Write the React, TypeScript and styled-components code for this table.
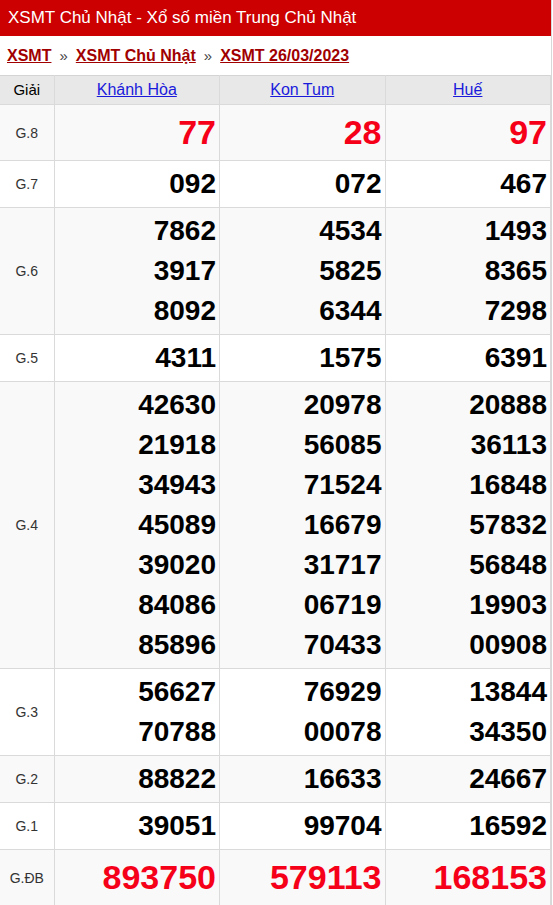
import React from 'react';
import styled, { createGlobalStyle } from 'styled-components';

const GlobalStyle = createGlobalStyle`
  body {
    margin: 0;
    background: #fff;
    font-family: "Liberation Sans", Arial, sans-serif;
  }
`;

const Wrapper = styled.div`
  width: 551px;
  border-right: 1px solid #d8d8d8;
  background: #fff;
`;

const TitleBar = styled.h2`
  margin: 0;
  height: 36px;
  padding: 0 8px;
  display: flex;
  align-items: center;
  background: #cc0000;
  color: #fff;
  font-size: 17px;
  font-weight: normal;
`;

const Breadcrumb = styled.div`
  height: 39px;
  padding: 0 7px;
  display: flex;
  align-items: center;
  font-size: 16px;
  font-weight: bold;
`;

const Crumb = styled.a`
  color: #a00000;
  text-decoration: underline;
`;

const Sep = styled.span`
  color: #444;
  font-weight: normal;
  font-size: 15px;
  margin: 0 8px;
`;

const Table = styled.table`
  width: 100%;
  border-collapse: collapse;
  table-layout: fixed;
`;

const HeadCell = styled.th`
  background: #e8e8e8;
  border: 1px solid #dadada;
  border-top-color: #d4d4d4;
  padding: 3px 2px;
  line-height: 22px;
  font-size: 15px;
  font-weight: normal;
  color: #000;
  text-align: center;
  &:first-child {
    border-left: none;
  }
`;

const HeadLink = styled.a`
  color: #1a1adb;
  font-size: 16px;
  text-decoration: underline;
`;

const Row = styled.tr<{ $striped: boolean }>`
  background: ${(p) => (p.$striped ? '#f9f9f9' : '#fff')};
`;

const LabelCell = styled.td`
  border: 1px solid #dadada;
  border-left: none;
  padding: 3px 2px;
  text-align: center;
  vertical-align: middle;
  font-size: 14px;
  color: #333;
`;

const NumberCell = styled.td`
  border: 1px solid #dadada;
  padding: 3px 3px;
  text-align: right;
  vertical-align: middle;
`;

const Num = styled.div<{ $special: boolean }>`
  font-weight: bold;
  font-size: ${(p) => (p.$special ? '34px' : '28px')};
  line-height: ${(p) => (p.$special ? '49px' : '40px')};
  color: ${(p) => (p.$special ? '#f50018' : '#000')};
`;

const provinces = ['Khánh Hòa', 'Kon Tum', 'Huế'];

type Prize = { label: string; special?: boolean; values: string[][] };

const prizes: Prize[] = [
  { label: 'G.8', special: true, values: [['77'], ['28'], ['97']] },
  { label: 'G.7', values: [['092'], ['072'], ['467']] },
  {
    label: 'G.6',
    values: [
      ['7862', '3917', '8092'],
      ['4534', '5825', '6344'],
      ['1493', '8365', '7298'],
    ],
  },
  { label: 'G.5', values: [['4311'], ['1575'], ['6391']] },
  {
    label: 'G.4',
    values: [
      ['42630', '21918', '34943', '45089', '39020', '84086', '85896'],
      ['20978', '56085', '71524', '16679', '31717', '06719', '70433'],
      ['20888', '36113', '16848', '57832', '56848', '19903', '00908'],
    ],
  },
  {
    label: 'G.3',
    values: [
      ['56627', '70788'],
      ['76929', '00078'],
      ['13844', '34350'],
    ],
  },
  { label: 'G.2', values: [['88822'], ['16633'], ['24667']] },
  { label: 'G.1', values: [['39051'], ['99704'], ['16592']] },
  { label: 'G.ĐB', special: true, values: [['893750'], ['579113'], ['168153']] },
];

export default function App() {
  return (
    <Wrapper>
      <GlobalStyle />
      <TitleBar>XSMT Chủ Nhật - Xổ số miền Trung Chủ Nhật</TitleBar>
      <Breadcrumb>
        <Crumb href="#">XSMT</Crumb>
        <Sep>»</Sep>
        <Crumb href="#">XSMT Chủ Nhật</Crumb>
        <Sep>»</Sep>
        <Crumb href="#">XSMT 26/03/2023</Crumb>
      </Breadcrumb>
      <Table>
        <colgroup>
          <col style={{ width: 54 }} />
          <col />
          <col />
          <col />
        </colgroup>
        <thead>
          <tr>
            <HeadCell>Giải</HeadCell>
            {provinces.map((name) => (
              <HeadCell key={name}>
                <HeadLink href="#">{name}</HeadLink>
              </HeadCell>
            ))}
          </tr>
        </thead>
        <tbody>
          {prizes.map((prize, i) => (
            <Row key={prize.label} $striped={i % 2 === 0}>
              <LabelCell>{prize.label}</LabelCell>
              {prize.values.map((list, j) => (
                <NumberCell key={j}>
                  {list.map((n, k) => (
                    <Num key={k} $special={!!prize.special}>
                      {n}
                    </Num>
                  ))}
                </NumberCell>
              ))}
            </Row>
          ))}
        </tbody>
      </Table>
    </Wrapper>
  );
}
